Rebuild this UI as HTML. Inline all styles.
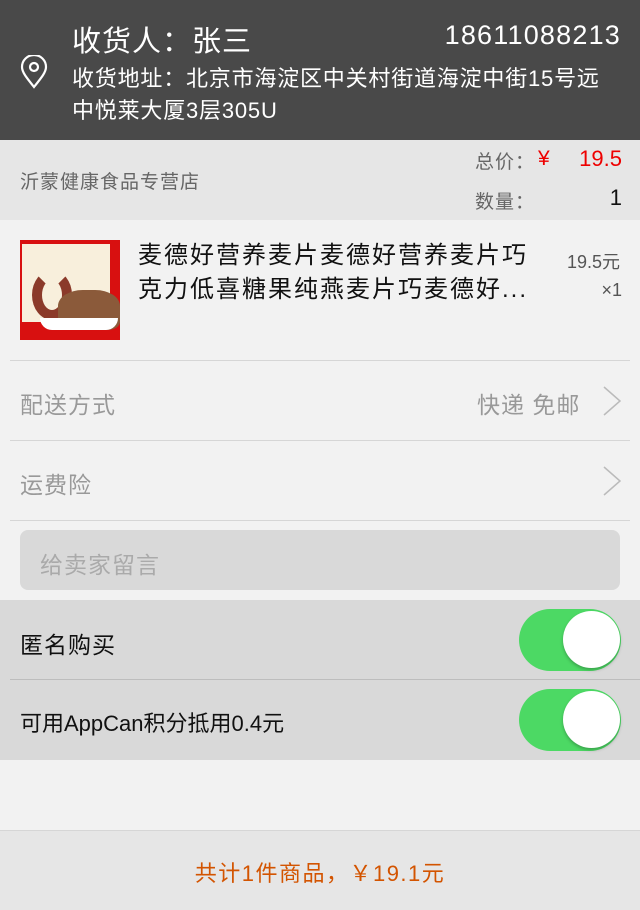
<!DOCTYPE html>
<html><head><meta charset="utf-8"><style>
*{margin:0;padding:0;box-sizing:border-box}
body{width:640px;height:910px;background:#f2f2f2;font-family:"Liberation Sans","Noto Sans CJK SC",sans-serif;position:relative;overflow:hidden}
.a{position:absolute;white-space:nowrap}
</style></head><body>
<div class="a" style="left:0;top:0;width:640px;height:140px;background:#494949"></div>
<svg class="a" style="left:20px;top:55px" width="28" height="34" viewBox="0 0 28 34"><path d="M14 32 C6 22 2 17 2 12 A12 12 0 0 1 26 12 C26 17 22 22 14 32Z" fill="none" stroke="#fff" stroke-width="2.2"/><circle cx="14" cy="12" r="4" fill="none" stroke="#fff" stroke-width="2.2"/></svg>
<div class="a" style="left:72px;top:18px;font-size:29px;letter-spacing:1px;color:#fff">收货人：张三</div>
<div class="a" style="right:19px;top:20px;font-size:27px;letter-spacing:1.2px;color:#fff">18611088213</div>
<div class="a" style="left:72px;top:63px;font-size:22px;letter-spacing:0.8px;line-height:32px;color:#fff;white-space:normal;width:550px">收货地址：北京市海淀区中关村街道海淀中街15号远<br>中悦莱大厦3层305U</div>
<div class="a" style="left:0;top:140px;width:640px;height:80px;background:#e6e6e6"></div>
<div class="a" style="left:20px;top:167px;font-size:19px;letter-spacing:1px;color:#666">沂蒙健康食品专营店</div>
<div class="a" style="left:475px;top:147px;font-size:19px;letter-spacing:1px;color:#666">总价：</div>
<div class="a" style="left:538px;top:147px;font-size:21px;color:#e00">¥</div>
<div class="a" style="right:18px;top:146px;font-size:22px;color:#e00">19.5</div>
<div class="a" style="left:475px;top:187px;font-size:19px;letter-spacing:1px;color:#666">数量：</div>
<div class="a" style="right:18px;top:185px;font-size:22px;color:#111">1</div>
<div class="a" style="left:20px;top:240px;width:100px;height:100px;background:#d81010;overflow:hidden">
<div class="a" style="left:2px;top:4px;width:88px;height:78px;background:#f8efdc"></div>
<div class="a" style="left:12px;top:30px;width:40px;height:50px;border:10px solid #8b3a2a;border-radius:50%;border-top-color:transparent"></div>
<div class="a" style="left:38px;top:50px;width:62px;height:40px;background:#8b5a3a;border-radius:40% 40% 20% 20%"></div>
<div class="a" style="left:20px;top:78px;width:78px;height:12px;background:#fff;border-radius:0 0 40px 40px"></div>
</div>
<div class="a" style="left:138px;top:239px;font-size:24px;letter-spacing:2px;line-height:34px;color:#111">麦德好营养麦片麦德好营养麦片巧<br>克力低喜糖果纯燕麦片巧麦德好...</div>
<div class="a" style="right:20px;top:248px;font-size:18px;color:#555">19.5元</div>
<div class="a" style="right:18px;top:280px;font-size:18px;color:#555">×1</div>
<div class="a" style="left:10px;top:360px;width:620px;height:1px;background:#d6d6d6"></div>
<div class="a" style="left:20px;top:386px;font-size:23px;letter-spacing:1px;color:#999">配送方式</div>
<div class="a" style="left:477px;top:386px;font-size:23px;letter-spacing:1px;color:#999">快递&nbsp;免邮</div>
<svg class="a" style="left:602px;top:386px" width="20" height="30"><path d="M2 1 L18 15 L2 29" fill="none" stroke="#bbb" stroke-width="1.5"/></svg>
<div class="a" style="left:10px;top:440px;width:620px;height:1px;background:#d6d6d6"></div>
<div class="a" style="left:20px;top:466px;font-size:23px;letter-spacing:1px;color:#999">运费险</div>
<svg class="a" style="left:602px;top:466px" width="20" height="30"><path d="M2 1 L18 15 L2 29" fill="none" stroke="#bbb" stroke-width="1.5"/></svg>
<div class="a" style="left:10px;top:520px;width:620px;height:1px;background:#d6d6d6"></div>
<div class="a" style="left:20px;top:530px;width:600px;height:60px;background:#d9d9d9;border-radius:8px"></div>
<div class="a" style="left:40px;top:546px;font-size:23px;letter-spacing:1px;color:#aaa">给卖家留言</div>
<div class="a" style="left:0;top:600px;width:640px;height:160px;background:#d9d9d9"></div>
<div class="a" style="left:10px;top:679px;width:630px;height:1px;background:#bdbdbd"></div>
<div class="a" style="left:20px;top:626px;font-size:23px;letter-spacing:1px;color:#111">匿名购买</div>
<div class="a" style="left:20px;top:706px;font-size:22px;color:#111">可用AppCan积分抵用0.4元</div>
<div class="a" style="left:519px;top:609px;width:102px;height:62px;border-radius:31px;background:#4cd964"></div>
<div class="a" style="left:563px;top:611px;width:57px;height:57px;border-radius:50%;background:#fff;box-shadow:0 2px 3px rgba(0,0,0,.25)"></div>
<div class="a" style="left:519px;top:689px;width:102px;height:62px;border-radius:31px;background:#4cd964"></div>
<div class="a" style="left:563px;top:691px;width:57px;height:57px;border-radius:50%;background:#fff;box-shadow:0 2px 3px rgba(0,0,0,.25)"></div>
<div class="a" style="left:0;top:830px;width:640px;height:80px;background:#e6e6e6;border-top:1px solid #d6d6d6"></div>
<div class="a" style="left:0;top:856px;width:640px;text-align:center;font-size:22px;letter-spacing:1.5px;color:#d35400">共计1件商品，￥19.1元</div>
</body></html>
